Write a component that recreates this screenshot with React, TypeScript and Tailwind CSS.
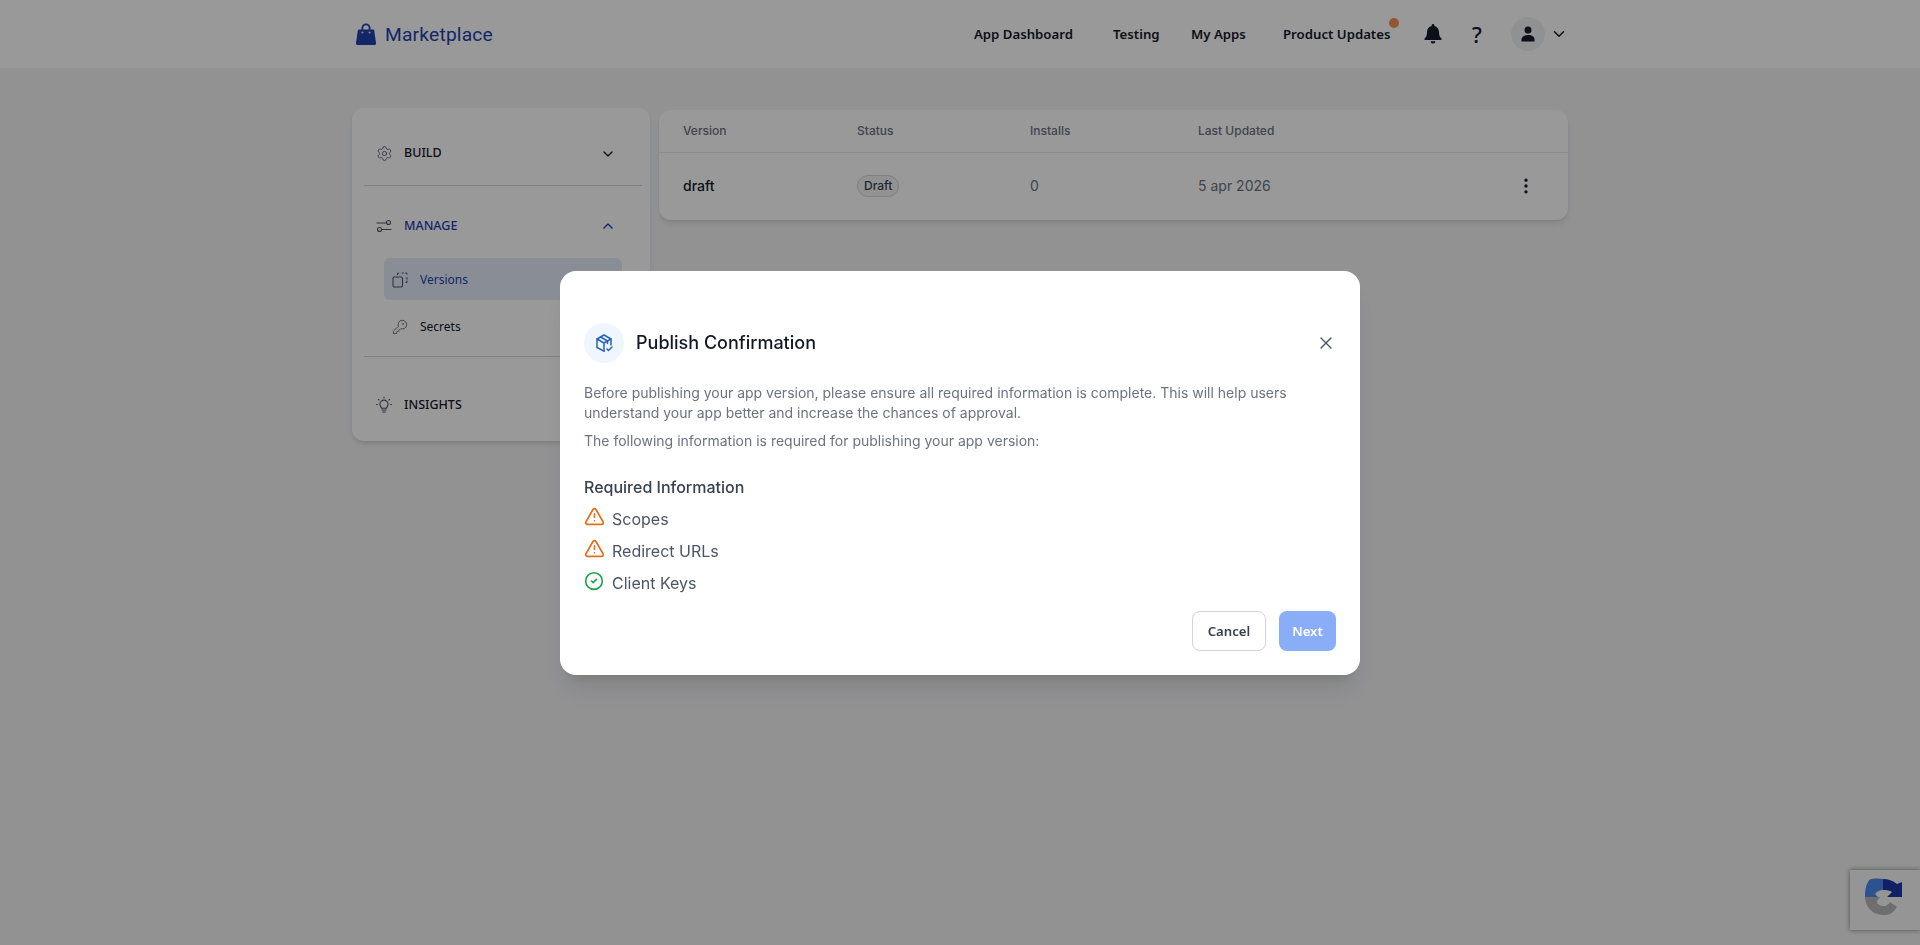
import React from 'react';
import { ChevronDown, ChevronUp, KeyRound, Settings, TriangleAlert, CircleCheck, X, EllipsisVertical } from 'lucide-react';

const BagIcon = () => (
  <svg width="20" height="22" viewBox="0 0 20 22" fill="#1e40af">
    <path d="M5.500 7V5a4.500 4.500 0 0 1 9 0v2h-1.800V5a2.700 2.700 0 0 0-5.400 0v2z" />
    <path d="M3 6.500h14a1.200 1.200 0 0 1 1.200 1.100L20 20a1.700 1.700 0 0 1-1.700 2H1.700A1.700 1.700 0 0 1 0 20L1.800 7.600A1.200 1.200 0 0 1 3 6.500z" />
    <circle cx="6.400" cy="9.500" r="1.100" fill="#dddddd" />
    <circle cx="13.600" cy="9.500" r="1.100" fill="#dddddd" />
  </svg>
);

const SlidersIcon = () => (
  <svg width="16" height="16" viewBox="0 0 16 16" fill="none" stroke="#4b5563" strokeWidth="1.1" strokeLinecap="round">
    <path d="M1 5h9" />
    <circle cx="12.500" cy="4.500" r="2" />
    <path d="M6 11.500h9" />
    <circle cx="3.500" cy="11.500" r="2" />
  </svg>
);

const VersionsIcon = () => (
  <svg width="16" height="16" viewBox="0 0 16 16" fill="none" stroke="#4b5563" strokeWidth="1.100" strokeLinecap="round">
    <rect x="1" y="5" width="9.500" height="10" rx="1.500" />
    <path d="M5.500 2.500V2a1 1 0 0 1 1-1h1M10 1h1.500M13.500 1h.5a1 1 0 0 1 1 1v1M15 5.500V7M15 9v.5a1 1 0 0 1-1 1h-1" strokeDasharray="2 1.400" />
  </svg>
);

const BulbIcon = () => (
  <svg width="16" height="16" viewBox="0 0 16 16" fill="none" stroke="#4b5563" strokeWidth="1.100" strokeLinecap="round">
    <path d="M5.500 11.200c0-1.400-1.600-2-1.600-4a4.100 4.100 0 0 1 8.200 0c0 2-1.600 2.600-1.600 4z" />
    <path d="M6 13h4M6.800 15h2.400" />
    <path d="M8 0.400v.6M2.400 2.400l.6.6M13.600 2.400l-.6.6M.6 7.500h.8M14.600 7.500h.8" />
  </svg>
);

const BoxCheckIcon = () => (
  <svg width="20" height="20" viewBox="0 0 20 20" fill="none" stroke="#2563b8" strokeWidth="1.500" strokeLinecap="round" strokeLinejoin="round">
    <path d="M10 18.200 3 14.500V6l7-4 7 4v6" />
    <path d="M3 6l7 4 7-4M10 10v8.200" />
    <path d="M6.500 4l7 4v2.500" />
    <path d="M13 16l1.500 1.500L18 14" />
  </svg>
);

const BellIcon = () => (
  <svg width="18" height="20" viewBox="0 0 18 20" fill="#15192b">
    <path d="M9 0a1.400 1.400 0 0 1 1.400 1.400v.7c2.900.7 4.600 3.200 4.600 6.200 0 3.400 1 5 2.400 6.200.5.5.2 1.500-.6 1.500H1.200c-.8 0-1.100-1-.6-1.500C2 13.300 3 11.700 3 8.300c0-3 1.700-5.500 4.600-6.200v-.7A1.400 1.400 0 0 1 9 0z" />
    <path d="M6.600 17.200h4.800a2.400 2.400 0 0 1-4.800 0z" />
  </svg>
);

const UserIcon = () => (
  <svg width="14" height="16" viewBox="0 0 14 16" fill="#15192b">
    <circle cx="7" cy="4" r="3.500" />
    <path d="M0.500 15.500v-2c0-2.800 2.800-4.500 6.500-4.500s6.500 1.700 6.500 4.500v2z" />
  </svg>
);

const RecaptchaIcon = () => (
  <svg width="37" height="38" viewBox="0 0 37 38">
    <path d="M5 1.500C9 0 14 .5 18 1v11c-3 0-6 1.500-8 4l3 3H0C0 12 1 5 5 1.500z" fill="#4a8af0" />
    <path d="M18 1c5 0 10 1.500 14 5l5-2v15H22l5-5c-2-1.500-5-2-9-2z" fill="#1c3aa9" />
    <path d="M0 19h15l-3 4c0 2 .5 3 1 3 2 2 5 2 7 2 2-.5 3.500-2 5-4l7 5c-3 5-7 8-12 8s-10-1-12-3c-4-3-8-8-8-15z" fill="#b8b8b8" />
  </svg>
);

const navLinks = [
  { label: 'App Dashboard', cls: 'w-[139px]' },
  { label: 'Testing', cls: 'w-[78px]' },
  { label: 'My Apps', cls: 'w-[92px]' },
];

const App: React.FC = () => {
  return (
    <div className="relative h-[945px] overflow-hidden bg-[#f3f4f6] font-['Inter',sans-serif]">
      {/* Header */}
      <header className="h-[68px] bg-white">
        <div className="w-[1216px] ml-[352px] h-full flex items-center justify-between">
          <div className="flex items-center gap-[9px] pl-[4px]">
            <BagIcon />
            <span className="text-[19.2px] text-[#1e40af] font-['Roboto',sans-serif] tracking-[0.2px] pt-[3px]">Marketplace</span>
          </div>
          <div className="flex items-center font-['Noto_Sans',sans-serif] text-[13.2px] font-semibold text-[#15192b]">
            {navLinks.map((link) => (
              <span key={link.label} className={`${link.cls} pt-[1px]`}>{link.label}</span>
            ))}
            <span className="relative w-[141px] pt-[1px]">
              Product Updates
              <span className="absolute left-[106px] -top-[6px] w-[10px] h-[10px] rounded-full bg-[#f59052]" />
            </span>
            <span className="w-[48px] flex"><BellIcon /></span>
            <span className="w-[39px] text-[22px] font-medium leading-none">?</span>
            <span className="w-[34px] h-[34px] rounded-full bg-[#f1f2f4] flex items-center justify-center"><UserIcon /></span>
            <ChevronDown size={18} className="ml-[5px] text-[#15192b]" />
          </div>
        </div>
      </header>

      {/* Body */}
      <main className="w-[1216px] ml-[352px] mt-[40px] flex items-start gap-[9px]">
        <aside className="w-[298px] h-[333px] bg-white rounded-xl shadow-md pl-[12px] pr-[8px] shrink-0">
          <div className="h-[78px] pl-[12px] pr-[26px] flex items-center pt-[14px] border-b border-gray-300">
            <div className="w-[28px] shrink-0"><Settings size={17} strokeWidth={1.2} className="text-[#4b5563]" /></div>
            <span className="flex-1 text-[12.5px] font-medium font-['Noto_Sans',sans-serif] text-[#15192b]">BUILD</span>
            <ChevronDown size={16} className="text-[#15192b]" />
          </div>
          <div className="h-[80px] pl-[12px] pr-[26px] flex items-center">
            <div className="w-[28px] shrink-0"><SlidersIcon /></div>
            <span className="flex-1 text-[12.5px] font-medium font-['Noto_Sans',sans-serif] text-[#1e40af]">MANAGE</span>
            <ChevronUp size={16} className="text-[#1e40af]" />
          </div>
          <div className="-mt-[8px] pl-[20px] pr-[20px] text-[12px] font-['Noto_Sans',sans-serif]">
            <div className="h-[42px] pt-[1px] rounded-md bg-[#e4edfb] flex items-center pl-[8px] text-[#1e40af]">
              <span className="w-[28px]"><VersionsIcon /></span>Versions
            </div>
            <div className="h-[56px] pb-[2px] flex items-center pl-[8px] text-[#15192b]">
              <span className="w-[28px]"><KeyRound size={16} strokeWidth={1.2} className="text-[#4b5563]" /></span>Secrets
            </div>
          </div>
          <div className="h-[85px] pl-[12px] pr-[26px] flex items-center border-t border-gray-300 pt-[12px]">
            <div className="w-[28px] shrink-0"><BulbIcon /></div>
            <span className="flex-1 text-[12.5px] font-medium font-['Noto_Sans',sans-serif] text-[#15192b]">INSIGHTS</span>
          </div>
        </aside>

        <section className="flex-1 mt-[2px] bg-white rounded-xl shadow-md text-[13px]">
          <div className="h-[43px] pl-[24px] flex items-center border-b border-gray-200 text-[12px] font-medium text-[#6b7280]">
            <span className="w-[174px]">Version</span>
            <span className="w-[173px]">Status</span>
            <span className="w-[168px]">Installs</span>
            <span>Last Updated</span>
          </div>
          <div className="h-[67px] pl-[24px] pb-[2px] flex items-center text-[14px]">
            <span className="w-[174px] font-medium text-[#15192b]">draft</span>
            <span className="w-[173px]">
              <span className="inline-flex items-center h-[22px] px-[6px] rounded-full border border-gray-300 bg-gray-100 text-[12px] font-medium text-[#374151]">Draft</span>
            </span>
            <span className="w-[168px] text-[#6b7280]">0</span>
            <span className="w-[318px] text-[#6b7280]">5 apr 2026</span>
            <EllipsisVertical size={20} className="text-[#15192b]" />
          </div>
        </section>
      </main>

      {/* reCAPTCHA badge */}
      <div className="fixed right-0 bottom-[15px] w-[70px] h-[60px] bg-[#f9f9f9] shadow-[0_0_5px_gray] flex items-center justify-center pr-[3px] pb-[7px]">
        <RecaptchaIcon />
      </div>

      {/* Modal */}
      <div className="fixed inset-0 bg-black/40 flex items-center justify-center">
        <div className="w-[800px] h-[404px] bg-white rounded-2xl shadow-xl px-[24px] pt-[52px]">
          <div className="flex items-center h-[40px]">
            <div className="w-[40px] h-[40px] rounded-full bg-[#eff6ff] flex items-center justify-center"><BoxCheckIcon /></div>
            <h2 className="ml-[12px] flex-1 text-[18px] font-medium text-[#111827]">Publish Confirmation</h2>
            <X size={20} strokeWidth={1.6} className="text-[#4b5563]" />
          </div>
          <div className="mt-[20px] text-[14px] leading-[20px] text-[#6b7280]">
            <p>Before publishing your app version, please ensure all required information is complete. This will help users<br />understand your app better and increase the chances of approval.</p>
            <p className="mt-[8px]">The following information is required for publishing your app version:</p>
          </div>
          <h3 className="mt-[24px] text-[16px] leading-[24px] font-medium text-[#374151]">Required Information</h3>
          <ul className="mt-[4px] text-[16px] text-[#4b5563]">
            <li className="h-[32px] flex items-center"><TriangleAlert size={21} strokeWidth={1.9} className="text-[#e0701c] mr-[7px] -mt-[4px]" />Scopes</li>
            <li className="h-[32px] flex items-center"><TriangleAlert size={21} strokeWidth={1.9} className="text-[#e0701c] mr-[7px] -mt-[4px]" />Redirect URLs</li>
            <li className="h-[32px] flex items-center"><CircleCheck size={20} strokeWidth={1.9} className="text-[#16a34a] mr-[8px] -mt-[4px]" />Client Keys</li>
          </ul>
          <div className="mt-[12px] flex justify-end gap-[13px] font-['Noto_Sans',sans-serif] text-[13.2px] font-semibold">
            <button className="w-[74px] h-[40px] pt-[2px] rounded-lg border border-[#d1d5db] bg-white text-[#374151]">Cancel</button>
            <button className="w-[57px] h-[40px] pt-[2px] rounded-lg bg-[#8aadf8] text-white">Next</button>
          </div>
        </div>
      </div>
    </div>
  );
};

export default App;
